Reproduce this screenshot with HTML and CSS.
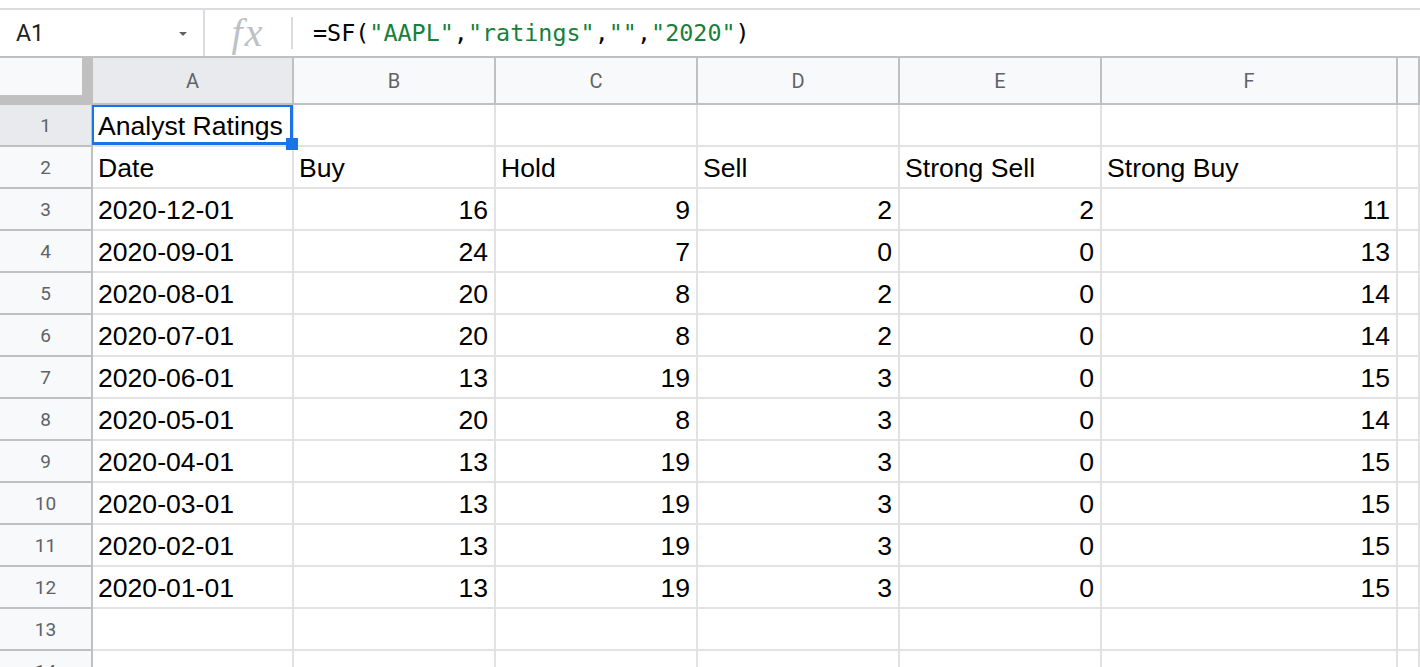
FILE: index.html
```html
<!DOCTYPE html>
<html lang="en">

<head>
    <meta charset="UTF-8">
    <meta name="viewport" content="width=device-width, initial-scale=1.0">
    <title>Analyst Ratings</title>

    <link rel="stylesheet" href="styles.css">
</head>

<body>
    <div class="top-strip"></div>

    <div class="formula-bar">
        <div class="name-box">
            <span>A1</span>
            <span class="caret"></span>
        </div>
        <div class="fx-box"><span class="fx">fx</span></div>
        <div class="formula">=SF(<span class="str">"AAPL"</span>,<span class="str">"ratings"</span>,<span class="str">""</span>,<span class="str">"2020"</span>)</div>
    </div>

    <div class="sheet">
        <!-- column headers -->
        <div class="corner"><div class="corner-box"></div></div>
        <div class="col-head selected">A</div>
        <div class="col-head">B</div>
        <div class="col-head">C</div>
        <div class="col-head">D</div>
        <div class="col-head">E</div>
        <div class="col-head">F</div>
        <div class="col-head"></div>

        <div class="row-head selected">1</div>
        <div class="cell active">Analyst Ratings<div class="selection"><div class="handle"></div></div></div>
        <div class="cell"></div><div class="cell"></div><div class="cell"></div><div class="cell"></div><div class="cell"></div><div class="cell"></div>

        <div class="row-head">2</div>
        <div class="cell">Date</div><div class="cell">Buy</div><div class="cell">Hold</div><div class="cell">Sell</div><div class="cell">Strong Sell</div><div class="cell">Strong Buy</div><div class="cell"></div>

        <div class="row-head">3</div>
        <div class="cell">2020-12-01</div><div class="cell num">16</div><div class="cell num">9</div><div class="cell num">2</div><div class="cell num">2</div><div class="cell num">11</div><div class="cell"></div>

        <div class="row-head">4</div>
        <div class="cell">2020-09-01</div><div class="cell num">24</div><div class="cell num">7</div><div class="cell num">0</div><div class="cell num">0</div><div class="cell num">13</div><div class="cell"></div>

        <div class="row-head">5</div>
        <div class="cell">2020-08-01</div><div class="cell num">20</div><div class="cell num">8</div><div class="cell num">2</div><div class="cell num">0</div><div class="cell num">14</div><div class="cell"></div>

        <div class="row-head">6</div>
        <div class="cell">2020-07-01</div><div class="cell num">20</div><div class="cell num">8</div><div class="cell num">2</div><div class="cell num">0</div><div class="cell num">14</div><div class="cell"></div>

        <div class="row-head">7</div>
        <div class="cell">2020-06-01</div><div class="cell num">13</div><div class="cell num">19</div><div class="cell num">3</div><div class="cell num">0</div><div class="cell num">15</div><div class="cell"></div>

        <div class="row-head">8</div>
        <div class="cell">2020-05-01</div><div class="cell num">20</div><div class="cell num">8</div><div class="cell num">3</div><div class="cell num">0</div><div class="cell num">14</div><div class="cell"></div>

        <div class="row-head">9</div>
        <div class="cell">2020-04-01</div><div class="cell num">13</div><div class="cell num">19</div><div class="cell num">3</div><div class="cell num">0</div><div class="cell num">15</div><div class="cell"></div>

        <div class="row-head">10</div>
        <div class="cell">2020-03-01</div><div class="cell num">13</div><div class="cell num">19</div><div class="cell num">3</div><div class="cell num">0</div><div class="cell num">15</div><div class="cell"></div>

        <div class="row-head">11</div>
        <div class="cell">2020-02-01</div><div class="cell num">13</div><div class="cell num">19</div><div class="cell num">3</div><div class="cell num">0</div><div class="cell num">15</div><div class="cell"></div>

        <div class="row-head">12</div>
        <div class="cell">2020-01-01</div><div class="cell num">13</div><div class="cell num">19</div><div class="cell num">3</div><div class="cell num">0</div><div class="cell num">15</div><div class="cell"></div>

        <div class="row-head">13</div>
        <div class="cell"></div><div class="cell"></div><div class="cell"></div><div class="cell"></div><div class="cell"></div><div class="cell"></div><div class="cell"></div>

        <div class="row-head">14</div>
        <div class="cell"></div><div class="cell"></div><div class="cell"></div><div class="cell"></div><div class="cell"></div><div class="cell"></div><div class="cell"></div>
    </div>
</body>

</html>
```

FILE: styles.css
```css
body {
    margin: 0;
    height: 667px;
    overflow: hidden;
    background-color: #fff;
    font-family: 'Liberation Sans', Arial, sans-serif;
}

.top-strip {
    height: 8px;
    border-bottom: 2px solid #dadce0;
}

/* formula bar */
.formula-bar {
    display: flex;
    align-items: center;
    height: 46px;
}

.name-box {
    width: 205px;
    height: 100%;
    box-sizing: border-box;
    padding: 0 16px;
    display: flex;
    align-items: center;
    justify-content: space-between;
    border-right: 2px solid #dadce0;
    font-family: Roboto, sans-serif;
    font-size: 23px;
    color: #202124;
}

.caret {
    width: 0;
    height: 0;
    border-left: 4px solid transparent;
    border-right: 4px solid transparent;
    border-top: 4px solid #5f6368;
    margin-top: 2px;
}

.fx-box {
    width: 88px;
    height: 32px;
    box-sizing: border-box;
    border-right: 2px solid #dadce0;
    display: flex;
    align-items: center;
    justify-content: center;
}

.fx {
    font-family: 'Liberation Serif', serif;
    font-style: italic;
    font-size: 40px;
    letter-spacing: 2px;
    color: #bdc1c6;
    margin-top: -2px;
}

.formula {
    padding-left: 20px;
    font-family: 'DejaVu Sans Mono', monospace;
    font-size: 23.4px;
    color: #000;
}

.str {
    color: #188038;
}

/* grid */
.sheet {
    display: grid;
    grid-template-columns: 93px 201px repeat(4, 202px) 296px 1fr;
    grid-template-rows: 47px;
    grid-auto-rows: 42px;
    border-top: 2px solid #c0c0c0;
}

.sheet > div {
    box-sizing: border-box;
}

.corner {
    background-color: #c0c0c0;
}

.corner-box {
    width: 82px;
    height: 37px;
    background-color: #f8f9fa;
}

.col-head, .row-head {
    background-color: #f8f9fa;
    border-right: 2px solid #c0c0c0;
    border-bottom: 2px solid #c0c0c0;
    color: #5f6368;
    display: flex;
    align-items: center;
    justify-content: center;
    font-family: Roboto, sans-serif;
}

.col-head {
    font-size: 20px;
}

.row-head {
    font-size: 19px;
}

.selected {
    background-color: #e8eaed;
}

.cell {
    border-right: 2px solid #e2e2e3;
    border-bottom: 2px solid #e2e2e3;
    padding: 3px 6px 0 5px;
    display: flex;
    align-items: center;
    white-space: nowrap;
    font-size: 26.6px;
    color: #000;
}

.num {
    justify-content: flex-end;
}

.active {
    position: relative;
}

.selection {
    position: absolute;
    top: 0;
    left: -1px;
    right: -1px;
    bottom: 0;
    border: solid #1a73e8;
    border-width: 2px 3px 3px 2px;
    z-index: 2;
}

.handle {
    position: absolute;
    right: -8px;
    bottom: -8px;
    width: 12px;
    height: 12px;
    background-color: #1a73e8;
}
```
